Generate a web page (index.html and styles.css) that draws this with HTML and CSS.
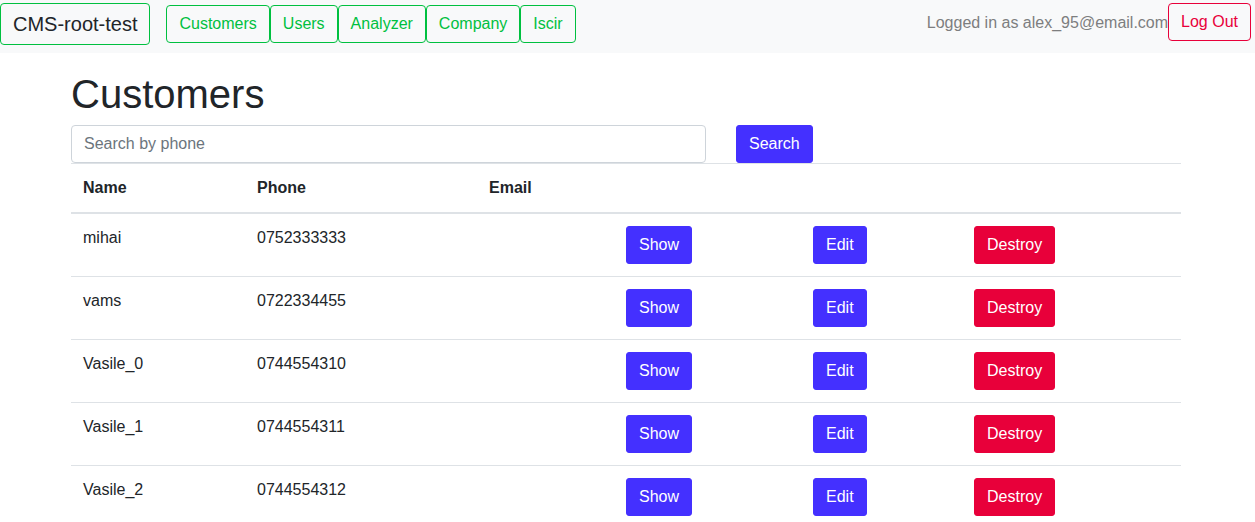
FILE: index.html
```html
<!DOCTYPE html>
<html lang="en">
<head>
<meta charset="utf-8">
<title>Customers</title>
<link rel="stylesheet" href="styles.css">
</head>
<body>
<nav class="navbar">
  <a class="brand" href="#">CMS-root-test</a>
  <ul class="nav">
    <li><a class="nav-btn" href="#">Customers</a></li>
    <li><a class="nav-btn" href="#">Users</a></li>
    <li><a class="nav-btn" href="#">Analyzer</a></li>
    <li><a class="nav-btn" href="#">Company</a></li>
    <li><a class="nav-btn" href="#">Iscir</a></li>
  </ul>
  <div class="user">
    <span class="logged">Logged in as alex_95@email.com</span>
    <a class="logout" href="#">Log Out</a>
  </div>
</nav>
<main class="container">
  <h1 class="title">Customers</h1>
  <form class="search">
    <input class="search-input" type="text" placeholder="Search by phone">
    <button class="btn btn-primary" type="button">Search</button>
  </form>
  <table class="table">
    <colgroup>
      <col class="c-name"><col class="c-phone"><col class="c-email"><col class="c-show"><col class="c-edit"><col class="c-destroy">
    </colgroup>
    <thead>
      <tr><th>Name</th><th>Phone</th><th>Email</th><th colspan="3"></th></tr>
    </thead>
    <tbody>
      <tr><td>mihai</td><td>0752333333</td><td></td><td><a class="btn btn-primary" href="#">Show</a></td><td><a class="btn btn-primary" href="#">Edit</a></td><td><a class="btn btn-danger" href="#">Destroy</a></td></tr>
      <tr><td>vams</td><td>0722334455</td><td></td><td><a class="btn btn-primary" href="#">Show</a></td><td><a class="btn btn-primary" href="#">Edit</a></td><td><a class="btn btn-danger" href="#">Destroy</a></td></tr>
      <tr><td>Vasile_0</td><td>0744554310</td><td></td><td><a class="btn btn-primary" href="#">Show</a></td><td><a class="btn btn-primary" href="#">Edit</a></td><td><a class="btn btn-danger" href="#">Destroy</a></td></tr>
      <tr><td>Vasile_1</td><td>0744554311</td><td></td><td><a class="btn btn-primary" href="#">Show</a></td><td><a class="btn btn-primary" href="#">Edit</a></td><td><a class="btn btn-danger" href="#">Destroy</a></td></tr>
      <tr><td>Vasile_2</td><td>0744554312</td><td></td><td><a class="btn btn-primary" href="#">Show</a></td><td><a class="btn btn-primary" href="#">Edit</a></td><td><a class="btn btn-danger" href="#">Destroy</a></td></tr>
    </tbody>
  </table>
</main>
</body>
</html>
```
FILE: styles.css
```css
* { box-sizing: border-box; }
body {
  margin: 0;
  font-family: "Liberation Sans", Arial, sans-serif;
  font-size: 16px;
  line-height: 1.5;
  color: #212529;
  background: #fff;
}
a { text-decoration: none; }
.navbar {
  display: flex;
  align-items: flex-start;
  background: #f8f9fa;
  height: 53px;
  padding: 3px 4px 0 0;
}
.brand {
  display: block;
  font-size: 20px;
  line-height: 30px;
  padding: 5px 12px;
  color: #212529;
  border: 1px solid #00c040;
  border-radius: 4px;
  margin-right: 16px;
}
.nav {
  display: flex;
  list-style: none;
  margin: 2px 0 0;
  padding: 0;
}
.nav-btn {
  display: block;
  padding: 6px 12px;
  line-height: 24px;
  color: #00c040;
  border: 1px solid #00c040;
  border-radius: 4px;
}
.user {
  margin-left: auto;
  display: flex;
  align-items: center;
}
.logged { color: #7d7e7f; padding-top: 1px; }
.logout {
  display: block;
  padding: 6px 12px;
  line-height: 24px;
  color: #e8003a;
  border: 1px solid #e8003a;
  border-radius: 4px;
}
.container {
  width: 1140px;
  margin: 0 0 0 calc(50% - 571.5px);
  padding: 0 15px;
}
.title {
  font-size: 40px;
  font-weight: 500;
  line-height: 48px;
  margin: 17px 0 7px;
}
.search {
  display: flex;
  align-items: flex-start;
  gap: 30px;
}
.search-input {
  width: 635px;
  height: 38px;
  padding: 6px 12px;
  font: inherit;
  color: #495057;
  border: 1px solid #ced4da;
  border-radius: 4px;
}
.search-input::placeholder { color: #6c757d; }
.btn {
  display: inline-block;
  font: inherit;
  line-height: 24px;
  padding: 6px 12px;
  border: 1px solid transparent;
  border-radius: 3px;
  color: #fff;
  cursor: pointer;
}
.btn-primary { background: #4430ff; border-color: #4430ff; }
.btn-danger { background: #e8003a; border-color: #e8003a; }
.table {
  width: 100%;
  table-layout: fixed;
  border-collapse: collapse;
}
.c-name { width: 174px; }
.c-phone { width: 232px; }
.c-email { width: 137px; }
.c-show { width: 187px; }
.c-edit { width: 161px; }
.c-destroy { width: 219px; }
.table th, .table td {
  padding: 12px;
  text-align: left;
  vertical-align: top;
  border-top: 1px solid #dee2e6;
}
.table th {
  vertical-align: bottom;
  font-weight: 700;
  border-bottom: 2px solid #dee2e6;
}
.table tbody tr:first-child td { border-top: 0; }
```
